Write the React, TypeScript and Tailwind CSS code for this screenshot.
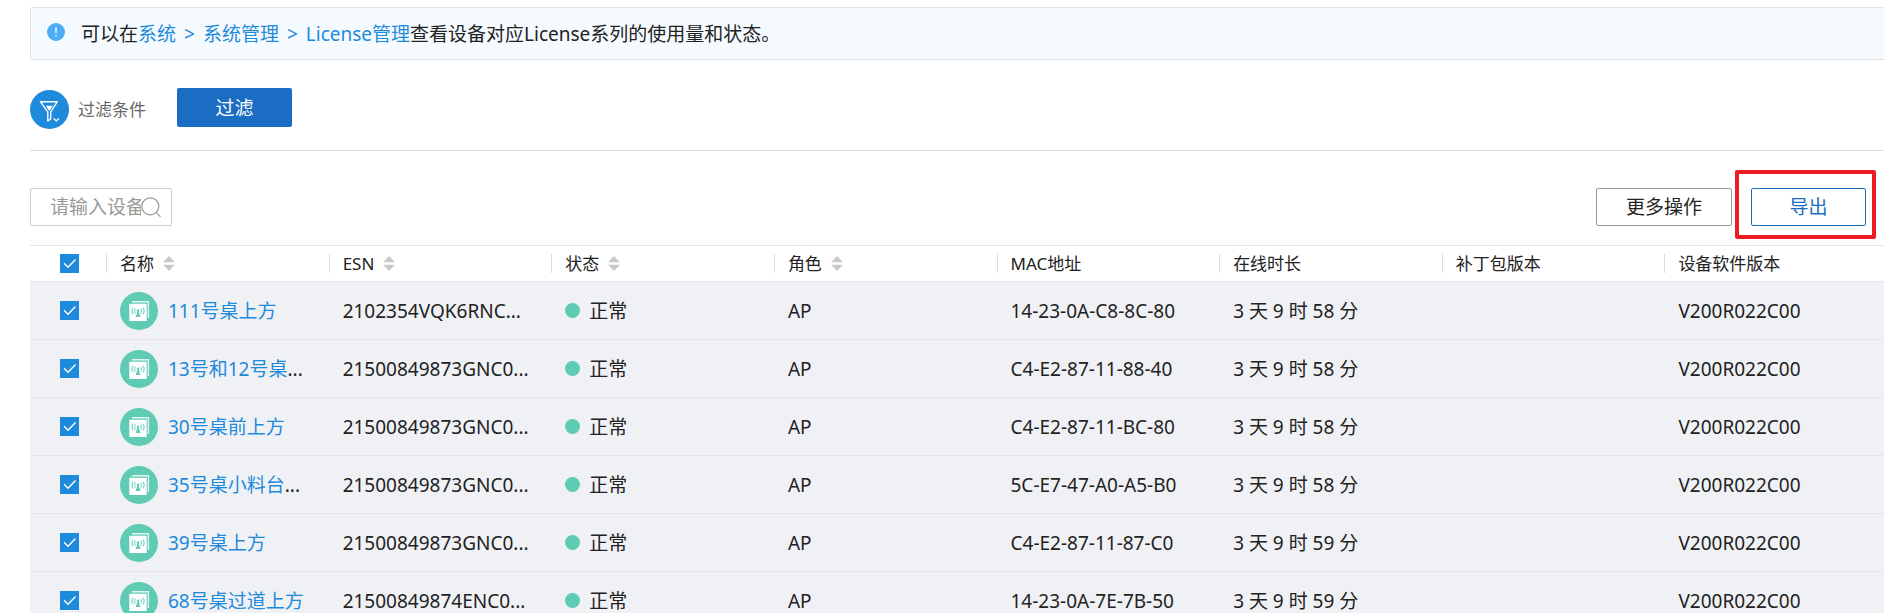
import { useState } from "react";

type Device = {
  name: string;
  more?: boolean;
  esn: string;
  status: string;
  role: string;
  mac: string;
  uptime: string;
  patch: string;
  version: string;
};

const devices: Device[] = [
  { name: "111号桌上方", esn: "2102354VQK6RNC...", status: "正常", role: "AP", mac: "14-23-0A-C8-8C-80", uptime: "3 天 9 时 58 分", patch: "", version: "V200R022C00" },
  { name: "13号和12号桌", more: true, esn: "21500849873GNC0...", status: "正常", role: "AP", mac: "C4-E2-87-11-88-40", uptime: "3 天 9 时 58 分", patch: "", version: "V200R022C00" },
  { name: "30号桌前上方", esn: "21500849873GNC0...", status: "正常", role: "AP", mac: "C4-E2-87-11-BC-80", uptime: "3 天 9 时 58 分", patch: "", version: "V200R022C00" },
  { name: "35号桌小料台", more: true, esn: "21500849873GNC0...", status: "正常", role: "AP", mac: "5C-E7-47-A0-A5-B0", uptime: "3 天 9 时 58 分", patch: "", version: "V200R022C00" },
  { name: "39号桌上方", esn: "21500849873GNC0...", status: "正常", role: "AP", mac: "C4-E2-87-11-87-C0", uptime: "3 天 9 时 59 分", patch: "", version: "V200R022C00" },
  { name: "68号桌过道上方", esn: "21500849874ENC0...", status: "正常", role: "AP", mac: "14-23-0A-7E-7B-50", uptime: "3 天 9 时 59 分", patch: "", version: "V200R022C00" },
];

const columns = [
  { title: "名称", sortable: true },
  { title: "ESN", sortable: true },
  { title: "状态", sortable: true },
  { title: "角色", sortable: true },
  { title: "MAC地址", sortable: false },
  { title: "在线时长", sortable: false },
  { title: "补丁包版本", sortable: false },
  { title: "设备软件版本", sortable: false },
];

function CheckBox({ label, checked, onChange }: { label: string; checked: boolean; onChange: () => void }) {
  return (
    <span className="relative block size-[19px]">
      <input
        type="checkbox"
        aria-label={label}
        checked={checked}
        onChange={onChange}
        className="peer block size-[19px] cursor-pointer appearance-none border border-[#bbb] bg-white checked:border-[#1e8adc] checked:bg-[#1e8adc]"
      />
      <svg viewBox="0 0 19 19" className="pointer-events-none absolute inset-0 hidden size-[19px] peer-checked:block" fill="none" stroke="#fff" strokeWidth="1.4">
        <path d="M4 9.3 8 13.2 15.5 5.6" />
      </svg>
    </span>
  );
}

function SortIcon() {
  return (
    <svg viewBox="0 0 12 15" className="h-[15px] w-3" fill="#c9c9c9" aria-hidden="true">
      <path d="M6 0 12 6.3H0z" />
      <path d="M6 15 12 8.7H0z" />
    </svg>
  );
}

function ApIcon() {
  return (
    <svg viewBox="0 0 38 38" className="size-[38px] shrink-0" aria-hidden="true">
      <circle cx="19" cy="19" r="19" fill="#5ecbb2" />
      <path d="M12 9.8H28.4V26" fill="none" stroke="#fff" strokeOpacity="0.8" strokeWidth="1.4" />
      <rect x="9.3" y="11.7" width="17.4" height="17.3" rx="0.6" fill="#fff" />
      <g fill="none" stroke="#5ecbb2" strokeOpacity="0.8" strokeWidth="1.1" strokeLinecap="round">
        <path d="M13 16C11.8 17.8 11.8 20.2 13 22" />
        <path d="M15.2 16.8C14.4 18.2 14.4 19.8 15.2 21.2" />
        <path d="M23.2 16C24.4 17.8 24.4 20.2 23.2 22" />
        <path d="M21 16.8C21.8 18.2 21.8 19.8 21 21.2" />
      </g>
      <circle cx="18.1" cy="18.8" r="1.3" fill="#5ecbb2" />
      <path d="M17.6 19.6H18.6L20.6 25H15.6z" fill="#5ecbb2" />
    </svg>
  );
}

function FilterIcon() {
  return (
    <svg viewBox="0 0 39 39" className="size-[39px]" fill="none" stroke="#fff" aria-hidden="true">
      <circle cx="19.5" cy="19.5" r="19.5" fill="#1e8adc" stroke="none" />
      <path d="M10.5 11.8H27.2L20.7 21.8V29L17.8 31V21.8z" strokeWidth="1.4" strokeLinejoin="round" />
      <path d="M15.8 15.7H22.8L19.3 21z" fill="#fff" stroke="none" />
      <path d="M23.6 28.6 26.3 30.8 29 28.6" strokeWidth="1.3" />
    </svg>
  );
}

export default function App() {
  const [selected, setSelected] = useState<boolean[]>(devices.map(() => true));
  const all = selected.every(Boolean);

  return (
    <div className="h-screen overflow-hidden bg-white font-['Noto_Sans','Noto_Sans_CJK_SC',sans-serif] text-[19px] leading-7 text-[#222]">
      <main className="-mr-1 pt-[7px] pl-[30px]">
        <div className="flex h-[53px] items-center gap-4 rounded-xs border border-[#e2e4e6] bg-[#f5faff] pl-4">
          <svg viewBox="0 0 18 18" className="mb-1 size-[18px]" aria-hidden="true">
            <circle cx="9" cy="9" r="9" fill="#4cadf5" />
            <path d="M8.2 4.5H9.8L9.5 10.6H8.5z" fill="#fff" />
            <rect x="8.3" y="12" width="1.4" height="1.5" fill="#fff" />
          </svg>
          <p>
            可以在
            <a href="#system" className="text-[#1e8adc]">
              系统<span className="mx-2">&gt;</span>系统管理<span className="mx-2">&gt;</span>License管理
            </a>
            查看设备对应License系列的使用量和状态。
          </p>
        </div>

        <div className="flex h-[91px] items-end border-b border-[#ddd] pb-[21px]">
          <button type="button" className="flex items-center gap-[9px] text-[17px] text-[#666]">
            <FilterIcon />
            过滤条件
          </button>
          <button type="button" className="mb-[2px] ml-[31px] flex h-[39px] w-[115px] items-center justify-center rounded-xs bg-[#1a6dc2] text-white">
            过滤
          </button>
        </div>

        <div className="flex items-center pt-[37px] pr-[22px] pb-[19px]">
          <div className="flex h-[38px] w-[142px] items-center rounded-xs border border-[#ccc] pr-[10px] pl-[19px]">
            <input
              type="text"
              aria-label="请输入设备名称"
              placeholder="请输入设备名称"
              className="w-0 min-w-0 flex-1 bg-transparent outline-none placeholder:text-[#999]"
            />
            <button type="button" aria-label="搜索" className="shrink-0">
              <svg viewBox="0 0 20 21" className="h-[21px] w-5" fill="none" stroke="#999" strokeWidth="1.2">
                <circle cx="9.3" cy="9.3" r="8.5" />
                <path d="M15.2 15.4 19.5 19.8" />
              </svg>
            </button>
          </div>
          <div className="ml-auto flex gap-[19px]">
            <button type="button" className="flex h-[38px] w-[136px] items-center justify-center rounded-xs border border-[#999]">
              更多操作
            </button>
            <div className="relative">
              <button type="button" className="flex h-[38px] w-[115px] items-center justify-center rounded-xs border border-[#1a6dc2] text-[#1a6dc2]">
                导出
              </button>
              <span className="pointer-events-none absolute -top-[18px] -right-[10px] -bottom-[13px] -left-4 rounded-xs border-4 border-[#ed1c24]" />
            </div>
          </div>
        </div>

        <table className="w-full table-fixed border-separate border-spacing-0 text-left">
          <thead>
            <tr className="text-[17px]">
              <th className="h-[37px] w-[77px] border-y border-[#e4e5e8] p-0">
                <div className="flex h-[19px] items-center border-r border-[#ddd] pl-[30px]">
                  <CheckBox label="全选" checked={all} onChange={() => setSelected(devices.map(() => !all))} />
                </div>
              </th>
              {columns.map((c) => (
                <th key={c.title} className="h-[37px] border-y border-[#e4e5e8] p-0 font-normal">
                  <div className="flex h-[19px] items-center gap-[9px] border-r border-[#ddd] pl-[13px]">
                    {c.title}
                    {c.sortable && <SortIcon />}
                  </div>
                </th>
              ))}
            </tr>
          </thead>
          <tbody className="bg-[#f0f1f5] [&_td]:h-[58px] [&_td]:border-b [&_td]:border-[#e4e5e8] [&_td]:py-0 [&_td]:pr-0 [&_td]:pl-[13px] [&_td:first-child]:pl-[30px]">
            {devices.map((d, i) => (
              <tr key={d.mac}>
                <td>
                  <CheckBox
                    label={d.name}
                    checked={selected[i]}
                    onChange={() => setSelected(selected.map((s, j) => (j === i ? !s : s)))}
                  />
                </td>
                <td>
                  <div className="flex items-center gap-[10px]">
                    <ApIcon />
                    <span className="whitespace-nowrap">
                      <a href={"#" + d.mac} className="text-[#1e8adc]">{d.name}</a>
                      {d.more && "..."}
                    </span>
                  </div>
                </td>
                <td>{d.esn}</td>
                <td>
                  <div className="flex items-center gap-[9px]">
                    <span className="size-[15px] rounded-full bg-[#5ecbb2]" />
                    {d.status}
                  </div>
                </td>
                <td>{d.role}</td>
                <td>{d.mac}</td>
                <td>{d.uptime}</td>
                <td>{d.patch}</td>
                <td>{d.version}</td>
              </tr>
            ))}
          </tbody>
        </table>
      </main>
    </div>
  );
}
